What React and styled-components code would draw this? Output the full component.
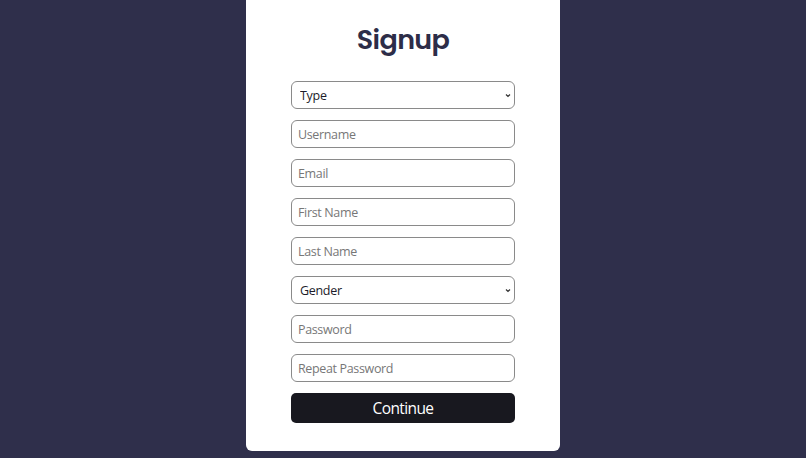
import React from "react";
import styled, { createGlobalStyle } from "styled-components";

const Global = createGlobalStyle`
  html, body { margin: 0; padding: 0; background: #2f2f4b; }
  body { font-family: "Open Sans", "Noto Sans", sans-serif; }
  * { box-sizing: border-box; }
`;

const Page = styled.div`
  width: 806px;
  height: 458px;
  display: flex;
  justify-content: center;
  align-items: flex-start;
  background: #2f2f4b;
  overflow: hidden;
`;

const Card = styled.div`
  width: 314px;
  height: 451px;
  background: #ffffff;
  border-radius: 0 0 6px 6px;
  display: flex;
  flex-direction: column;
  align-items: center;
  padding-top: 22px;
`;

const Title = styled.h1`
  margin: 0 0 24px;
  font-family: "Poppins", "Inter", sans-serif;
  font-weight: 600;
  font-size: 27px;
  line-height: 35px;
  color: #2d2d48;
  letter-spacing: -0.6px;
`;

const Form = styled.form`
  width: 224px;
  display: flex;
  flex-direction: column;
  gap: 11px;
`;

const Field = styled.input`
  width: 100%;
  height: 28px;
  border: 1px solid #8a8a8a;
  border-radius: 6px;
  padding: 0 6px;
  font-family: "Open Sans", sans-serif;
  font-size: 12.5px;
  letter-spacing: -0.35px;
  color: #222;
  background: #fff;
  outline: none;
  &::placeholder { color: #777777; }
`;

const SelectWrap = styled.div`
  position: relative;
  width: 100%;
`;

const Select = styled.select`
  width: 100%;
  height: 28px;
  display: block;
  border: 1px solid #8a8a8a;
  border-radius: 6px;
  padding: 0 8px;
  font-family: "Open Sans", sans-serif;
  font-size: 12.5px;
  letter-spacing: -0.3px;
  color: #1c1c2a;
  background: #fff;
  appearance: none;
  -webkit-appearance: none;
  outline: none;
`;

const Chevron = styled.svg`
  position: absolute;
  right: 4px;
  top: 12px;
  width: 6px;
  height: 5px;
  pointer-events: none;
`;

const Button = styled.button`
  width: 100%;
  height: 30px;
  border: none;
  border-radius: 5px;
  background: #18181f;
  color: #fff;
  font-family: "Open Sans", sans-serif;
  font-size: 15.5px;
  letter-spacing: -0.6px;
  cursor: pointer;
  padding: 0;
`;

const Dropdown = ({ label }) => (
  <SelectWrap>
    <Select defaultValue="">
      <option value="">{label}</option>
    </Select>
    <Chevron viewBox="0 0 6 5">
      <path d="M1 1.5 L3 3.5 L5 1.5" fill="none" stroke="#333" strokeWidth="1.2" />
    </Chevron>
  </SelectWrap>
);

export default function App() {
  return (
    <>
      <Global />
      <Page>
        <Card>
          <Title>Signup</Title>
          <Form onSubmit={(e) => e.preventDefault()}>
            <Dropdown label="Type" />
            <Field placeholder="Username" />
            <Field placeholder="Email" />
            <Field placeholder="First Name" />
            <Field placeholder="Last Name" />
            <Dropdown label="Gender" />
            <Field type="password" placeholder="Password" />
            <Field type="password" placeholder="Repeat Password" />
            <Button type="submit">Continue</Button>
          </Form>
        </Card>
      </Page>
    </>
  );
}
